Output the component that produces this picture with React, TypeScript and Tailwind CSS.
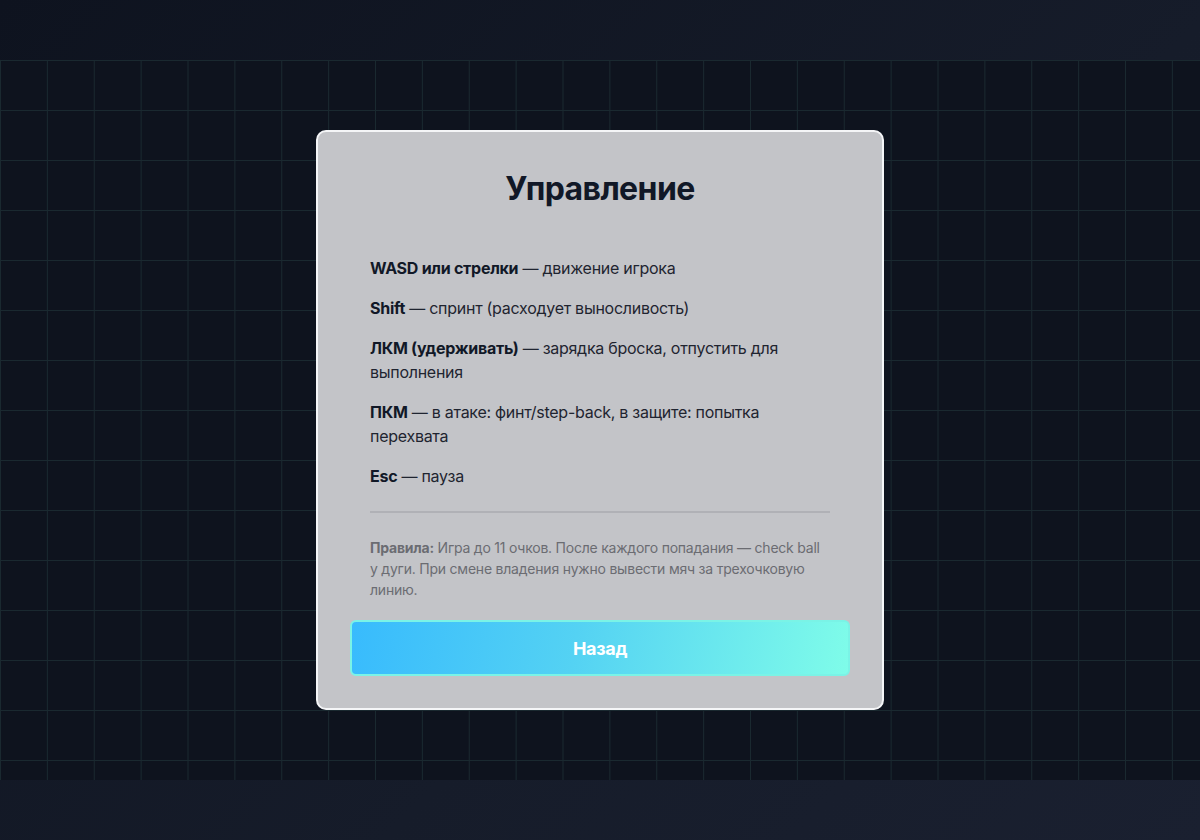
import React from "react";

const items: { k: string; v: string }[] = [
  { k: "WASD или стрелки", v: " — движение игрока" },
  { k: "Shift", v: " — спринт (расходует выносливость)" },
  { k: "ЛКМ (удерживать)", v: " — зарядка броска, отпустить для выполнения" },
  { k: "ПКМ", v: " — в атаке: финт/step-back, в защите: попытка перехвата" },
  { k: "Esc", v: " — пауза" },
];

export default function App() {
  return (
    <div
      className="w-[1200px] h-[840px] flex flex-col bg-[linear-gradient(135deg,#0e131f_0%,#161c2a_60%,#1a2030_100%)]"
      style={{ fontFamily: "Inter, 'Noto Sans', sans-serif" }}
    >
      <div className="h-[60px]" />
      <div className="h-[720px] flex items-center justify-center bg-[#0e131e] bg-[linear-gradient(to_right,#1a2930_1px,transparent_1px),linear-gradient(to_bottom,#1a2930_1px,transparent_1px)] bg-[size:46.875px_50px]">
        <div className="w-[568px] h-[580px] rounded-[10px] border-2 border-[#f4f5f7] bg-[#c3c4c8] px-8 pt-[37px] pb-8 flex flex-col">
          <h1 className="text-center text-[32px] leading-[40px] font-bold text-[#111827] tracking-[-0.6px]">
            Управление
          </h1>
          <div className="px-5 mt-[47px]">
            <ul className="flex flex-col gap-4 text-[16px] leading-[24px] text-[#1f2430] tracking-[-0.27px]">
              {items.map((it) => (
                <li key={it.k}>
                  <b className="font-bold text-[#111827]">{it.k}</b>
                  {it.v}
                </li>
              ))}
            </ul>
            <div className="mt-[23px] h-[2px] bg-[#b0b1b6]" />
            <p className="mt-[24px] text-[14px] leading-[21px] text-[#6b6c72] tracking-[-0.22px]">
              <b className="font-bold">Правила:</b> Игра до 11 очков. После каждого попадания — check ball у дуги. При смене владения нужно вывести мяч за трехочковую линию.
            </p>
          </div>
          <button className="mt-auto h-[56px] w-full rounded-md border-2 border-[#7af3e6] bg-[linear-gradient(100deg,#38bbfd_0%,#54d2f3_45%,#7ffce9_100%)] text-white font-bold text-[18px] tracking-[-0.3px]">
            Назад
          </button>
        </div>
      </div>
      <div className="h-[60px]" />
    </div>
  );
}
